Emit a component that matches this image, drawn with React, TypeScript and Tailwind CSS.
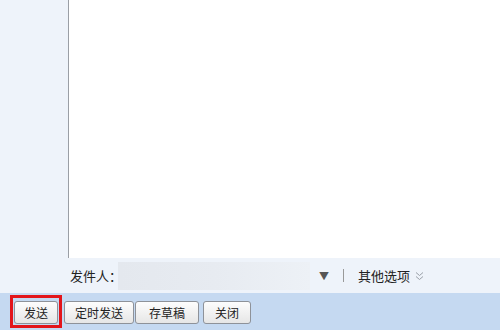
import React from "react";

const font = { fontFamily: '"Noto Sans CJK SC", "Noto Sans", sans-serif' };

function Btn({ label, w }: { label: string; w: string }) {
  return (
    <button
      className={`${w} h-[23px] rounded-[3px] border border-[#8e9299] bg-gradient-to-b from-[#fdfdfd] to-[#e6e6e6] text-[12px] leading-none text-[#222] whitespace-nowrap`}
    >
      {label}
    </button>
  );
}

export default function App() {
  return (
    <div className="w-[500px] h-[330px] flex flex-col bg-[#eef3fa] overflow-hidden" style={font}>
      <div className="flex flex-1">
        <div className="w-[69px] border-r border-[#9a9ea5] bg-[#eef3fa]" />
        <div className="flex-1 bg-white" />
      </div>

      <div className="h-[35px] flex items-center pl-[70px] text-[13px] text-[#222] whitespace-nowrap">
        <span className="w-[48px] shrink-0">发件人：</span>
        <div className="w-[192px] h-[28px] shrink-0 bg-gradient-to-r from-[#e4e8ee] via-[#e7ebf1] to-[#edf1f6]" />
        <span className="ml-[9px] text-[10px] text-[#555]">▼</span>
        <span className="ml-[14px] w-px h-[13px] bg-[#999]" />
        <span className="ml-[14px]">其他选项</span>
        <svg className="ml-[5px]" width="9" height="10" viewBox="0 0 9 10" fill="none" stroke="#9aa0a8" strokeWidth="1">
          <path d="M1 1.5l3.5 3 3.5-3M1 5.5l3.5 3 3.5-3" />
        </svg>
      </div>

      <div className="h-[37px] bg-[#c5d9f1] flex items-center pl-[10px]">
        <div className="border-[3px] border-[#e3151a] p-px">
          <Btn label="发送" w="w-[44px]" />
        </div>
        <div className="ml-[2px]">
          <Btn label="定时发送" w="w-[70px]" />
        </div>
        <div className="ml-[1px]">
          <Btn label="存草稿" w="w-[64px]" />
        </div>
        <div className="ml-[4px]">
          <Btn label="关闭" w="w-[48px]" />
        </div>
      </div>
    </div>
  );
}
